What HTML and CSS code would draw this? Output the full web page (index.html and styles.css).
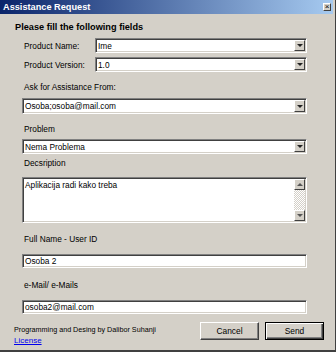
FILE: index.html
```html
<!DOCTYPE html>
<html lang="en">
<head>
  <meta charset="UTF-8" />
  <title>Assistance Request</title>
  <link rel="stylesheet" href="styles.css">
</head>
<body>
  <div class="window">
    <div class="titlebar">
      <span class="title">Assistance Request</span>
      <span class="close">&times;</span>
    </div>

    <div class="heading">Please fill the following fields</div>

    <div class="row first">
      <span class="row-label">Product Name:</span>
      <div class="field select"><span class="value">Ime</span><span class="drop"></span></div>
    </div>
    <div class="row second">
      <span class="row-label">Product Version:</span>
      <div class="field select"><span class="value">1.0</span><span class="drop"></span></div>
    </div>

    <div class="label ask-label">Ask for Assistance From:</div>
    <div class="field select wide ask"><span class="value">Osoba;osoba@mail.com</span><span class="drop"></span></div>

    <div class="label problem-label">Problem</div>
    <div class="field select wide problem"><span class="value">Nema Problema</span><span class="drop"></span></div>

    <div class="label desc-label">Decsription</div>
    <div class="field wide memo">
      <span class="memo-text">Aplikacija radi kako treba</span>
      <div class="scrollbar">
        <span class="arrow up"></span>
        <span class="track"></span>
        <span class="arrow down"></span>
      </div>
    </div>

    <div class="label name-label">Full Name - User ID</div>
    <div class="field wide text name"><span class="value">Osoba 2</span></div>

    <div class="label mail-label">e-Mail/ e-Mails</div>
    <div class="field wide text mail"><span class="value">osoba2@mail.com</span></div>

    <div class="footer">
      <div class="credits">
        <div>Programming and Desing by Dalibor Suhanji</div>
        <a href="#" class="license">License</a>
      </div>
      <div class="buttons">
        <button class="btn">Cancel</button>
        <button class="btn default">Send</button>
      </div>
    </div>
  </div>
</body>
</html>
```

FILE: styles.css
```css
body {
  margin: 0;
  background: #d4d0c8;
  font-family: "Liberation Sans", Arial, sans-serif;
  color: #000;
}
.window {
  width: 336px;
  height: 352px;
  box-sizing: border-box;
  background: #d4d0c8;
  border-right: 1px solid #404040;
  border-bottom: 2px solid #404040;
  display: flex;
  flex-direction: column;
}
.titlebar {
  height: 14px;
  margin-right: 2px;
  padding: 0 2px 0 3px;
  background: linear-gradient(to right, #0a246a, #a6caf0);
  display: flex;
  align-items: center;
  justify-content: space-between;
}
.title {
  color: white;
  font-weight: bold;
  font-size: 9.2px;
}
.close {
  width: 8px;
  height: 8px;
  box-sizing: border-box;
  background: #d4d0c8;
  border: 1px solid;
  border-color: #fff #404040 #404040 #fff;
  font-size: 8px;
  line-height: 6px;
  text-align: center;
}
.heading {
  margin: 7px 0 0 15px;
  font-weight: bold;
  font-size: 9.2px;
  line-height: 12px;
}
.row {
  display: flex;
  align-items: center;
  margin-left: 24px;
  width: 283px;
  font-size: 8.3px;
}
.row.first { margin-top: 5px; }
.row.second { margin-top: 4px; }
.row-label {
  width: 71px;
  flex-shrink: 0;
}
.label {
  margin-left: 24px;
  font-size: 8.3px;
  line-height: 12px;
}
.ask-label { margin-top: 9px; }
.problem-label { margin-top: 9px; }
.desc-label { margin-top: 3px; }
.name-label { margin-top: 10px; }
.mail-label { margin-top: 11px; }

.field {
  box-sizing: border-box;
  background: white;
  border: 1px solid;
  border-color: #808080 #fff #fff #808080;
  box-shadow: inset 1px 1px 0 #404040, inset -1px -1px 0 #d4d0c8;
  display: flex;
  align-items: center;
  font-size: 8.3px;
}
.row .field {
  flex: 1;
  height: 15px;
}
.field.wide {
  margin-left: 22px;
  width: 285px;
}
.value {
  flex: 1;
  padding-left: 2px;
  white-space: nowrap;
}
.drop {
  width: 11px;
  align-self: stretch;
  margin: 1px;
  box-sizing: border-box;
  background: #d4d0c8;
  border: 1px solid;
  border-color: #fff #404040 #404040 #fff;
  display: flex;
  align-items: center;
  justify-content: center;
}
.drop::after {
  content: "";
  border-left: 3px solid transparent;
  border-right: 3px solid transparent;
  border-top: 3px solid #222;
}
.ask { margin-top: 5px; height: 16px; }
.problem { margin-top: 4px; height: 15px; }
.memo {
  margin-top: 8px;
  height: 46px;
  align-items: stretch;
}
.memo-text {
  flex: 1;
  padding: 2px 0 0 2px;
  line-height: 10px;
}
.scrollbar {
  width: 11px;
  margin: 1px;
  display: flex;
  flex-direction: column;
}
.track {
  flex: 1;
  background: repeating-conic-gradient(#d4d0c8 0 25%, #fff 0 50%) 0 0 / 2px 2px;
}
.arrow {
  height: 11px;
  box-sizing: border-box;
  background: #d4d0c8;
  border: 1px solid;
  border-color: #fff #404040 #404040 #fff;
  display: flex;
  align-items: center;
  justify-content: center;
}
.arrow.up::after {
  content: "";
  border-left: 3px solid transparent;
  border-right: 3px solid transparent;
  border-bottom: 3px solid #555;
}
.arrow.down::after {
  content: "";
  border-left: 3px solid transparent;
  border-right: 3px solid transparent;
  border-top: 3px solid #555;
}
.text { height: 14px; }
.name { margin-top: 9px; }
.mail { margin-top: 9px; }

.footer {
  margin-top: 8px;
  padding: 0 11px 0 14px;
  display: flex;
  justify-content: space-between;
}
.credits {
  margin-top: 2px;
  font-size: 7.2px;
  line-height: 11px;
}
.license {
  color: #0000ee;
  font-size: 8px;
}
.buttons {
  display: flex;
  gap: 6px;
}
.btn {
  width: 59px;
  height: 18px;
  padding: 0;
  box-sizing: border-box;
  background: #d4d0c8;
  font-family: "Liberation Sans", Arial, sans-serif;
  font-size: 8.4px;
  color: #000;
  border: 1px solid;
  border-color: #fff #404040 #404040 #fff;
  box-shadow: inset -1px -1px 0 #808080;
}
.btn.default {
  border: 1px solid #000;
  box-shadow: inset 1px 1px 0 #fff, inset -1px -1px 0 #404040, inset -2px -2px 0 #808080;
}
```
